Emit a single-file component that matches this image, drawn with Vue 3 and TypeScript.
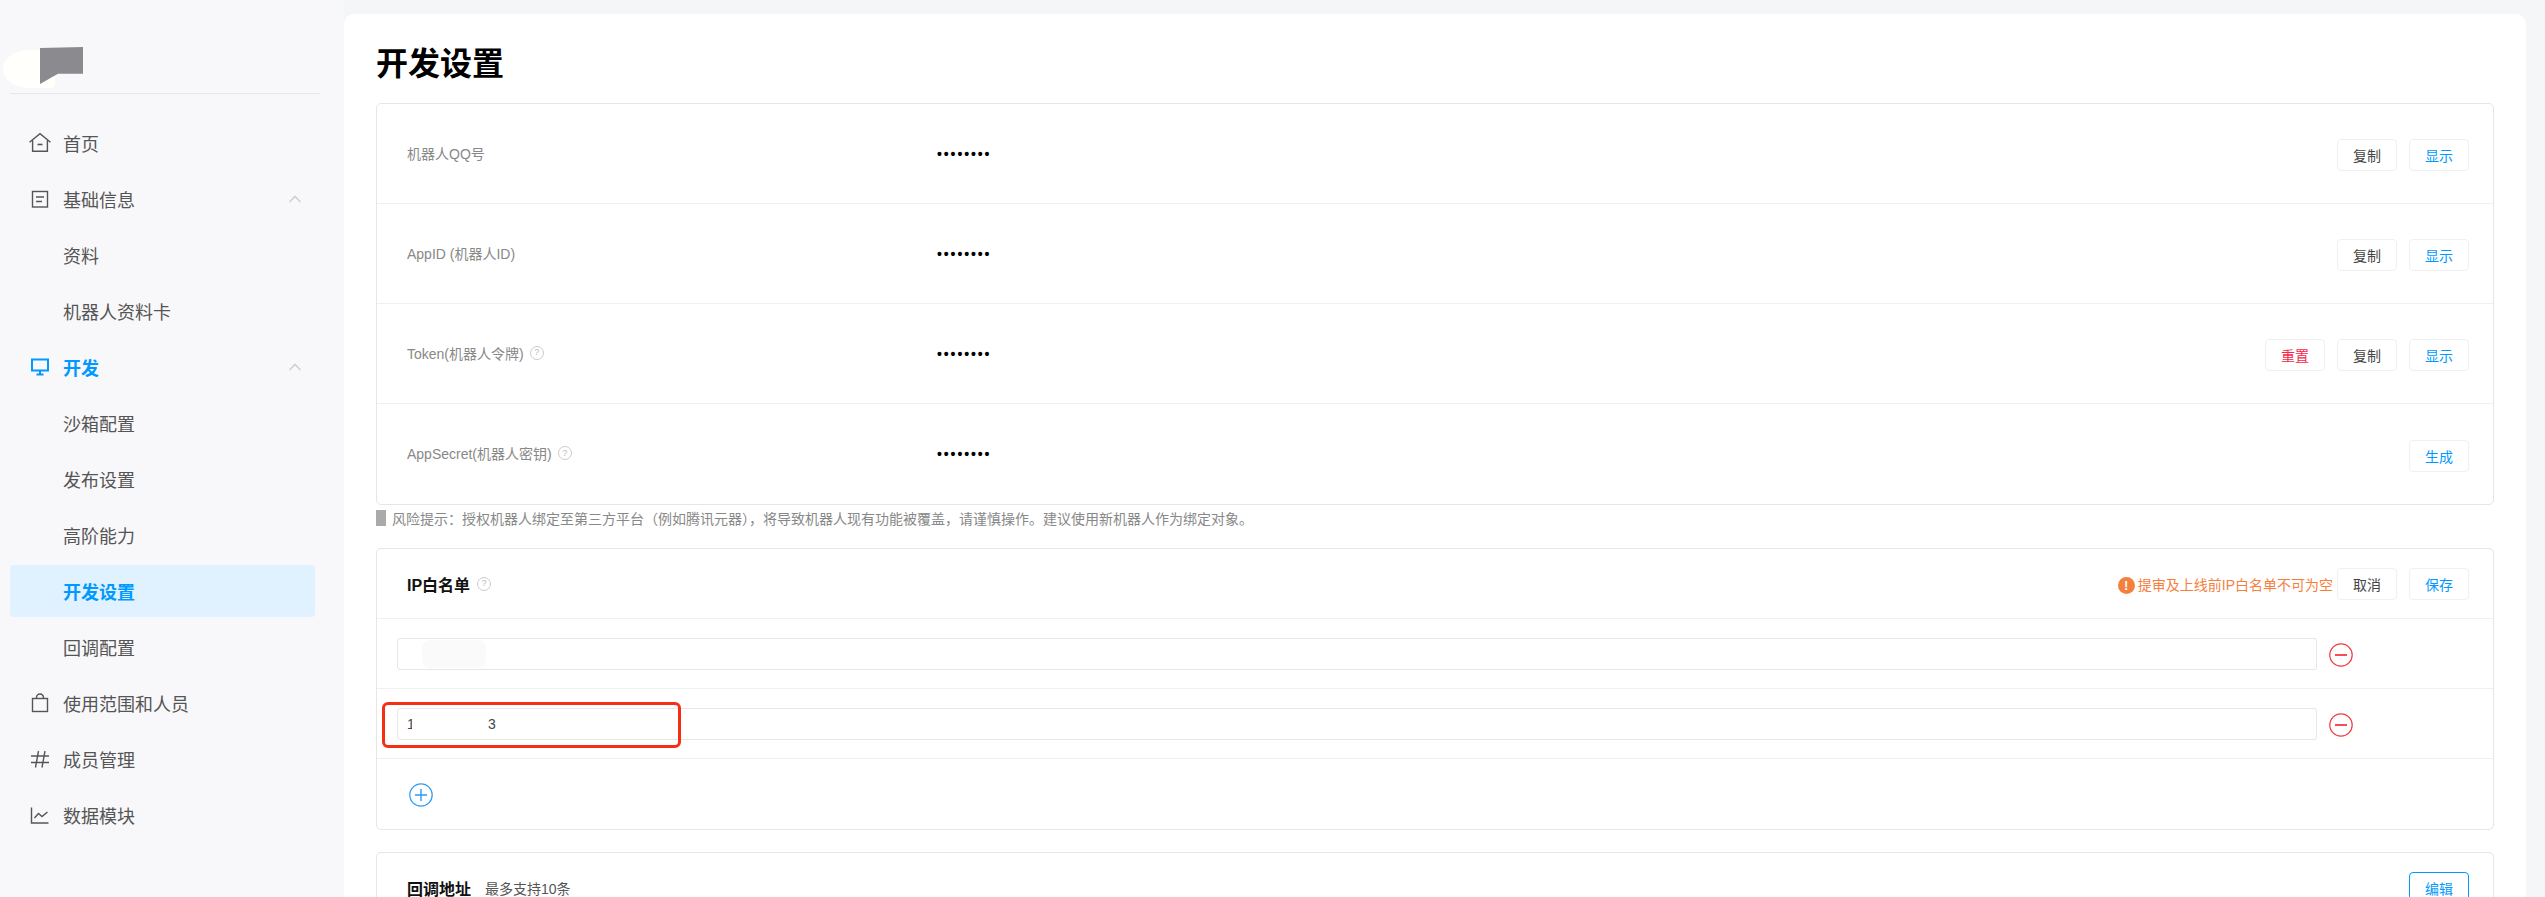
<script setup lang="ts">
type NavItem = { label: string; icon?: string; sub?: boolean; chevron?: boolean; blue?: boolean; active?: boolean }
type Action = { label: string; tone: string }

const nav: NavItem[] = [
  { label: '首页', icon: 'home' },
  { label: '基础信息', icon: 'doc', chevron: true },
  { label: '资料', sub: true },
  { label: '机器人资料卡', sub: true },
  { label: '开发', icon: 'monitor', chevron: true, blue: true },
  { label: '沙箱配置', sub: true },
  { label: '发布设置', sub: true },
  { label: '高阶能力', sub: true },
  { label: '开发设置', sub: true, active: true },
  { label: '回调配置', sub: true },
  { label: '使用范围和人员', icon: 'bag' },
  { label: '成员管理', icon: 'hash' },
  { label: '数据模块', icon: 'chart' },
]

const copy: Action = { label: '复制', tone: 'dark' }
const show: Action = { label: '显示', tone: 'blue' }

const secrets: { label: string; help: boolean; actions: Action[] }[] = [
  { label: '机器人QQ号', help: false, actions: [copy, show] },
  { label: 'AppID (机器人ID)', help: false, actions: [copy, show] },
  { label: 'Token(机器人令牌)', help: true, actions: [{ label: '重置', tone: 'red' }, copy, show] },
  { label: 'AppSecret(机器人密钥)', help: true, actions: [{ label: '生成', tone: 'blue' }] },
]
</script>

<template>
  <div class="page">
    <aside class="sidebar">
      <div class="brand">
        <span class="brand-smudge"></span>
        <span class="brand-mark"></span>
      </div>
      <nav class="nav">
        <div
          v-for="item in nav"
          :key="item.label"
          class="nav-item"
          :class="{ sub: item.sub, blue: item.blue, active: item.active }"
        >
          <span v-if="item.icon" class="nav-icon">
            <svg viewBox="0 0 24 24" width="24" height="24" fill="none" stroke="currentColor" stroke-width="1.4">
              <template v-if="item.icon === 'home'">
                <path d="M1.5 11.2 12 2.6l10.5 8.6" />
                <path d="M4.6 9.2v11h14.8v-11" />
                <path d="M9.5 13.5h5" stroke-width="1.6" />
              </template>
              <template v-else-if="item.icon === 'doc'">
                <rect x="4.5" y="4.5" width="15" height="15.5" />
                <path d="M8 10h8M8 14.5h6" />
              </template>
              <template v-else-if="item.icon === 'monitor'">
                <rect x="4" y="4.5" width="16" height="11" stroke-width="2" />
                <path d="M12 15.5v4M8.5 19.5h7" stroke-width="2" />
              </template>
              <template v-else-if="item.icon === 'bag'">
                <rect x="4.5" y="7.5" width="15" height="13" />
                <path d="M8.5 7.5V6.5a3.5 3.5 0 0 1 7 0v1" />
              </template>
              <template v-else-if="item.icon === 'hash'">
                <path d="M3 9h18M3 15.5h18M10.5 4 7.5 20.5M17 4l-3 16.5" />
              </template>
              <template v-else>
                <path d="M3.5 4.5v15.5h17" />
                <path d="M6.5 15l4-4.5 3.5 3 5.5-4.5" />
              </template>
            </svg>
          </span>
          <span class="nav-label">{{ item.label }}</span>
          <svg v-if="item.chevron" class="chevron" viewBox="0 0 14 8" width="14" height="8" fill="none">
            <path d="M1.5 7 7 1.5 12.5 7" stroke="#cfd0d2" stroke-width="1.6" />
          </svg>
        </div>
      </nav>
    </aside>

    <main class="main">
      <section class="panel">
        <h1 class="title">开发设置</h1>

        <div class="card">
          <div v-for="row in secrets" :key="row.label" class="secret-row">
            <div class="secret-label">
              <span>{{ row.label }}</span>
              <span v-if="row.help" class="help">?</span>
            </div>
            <div class="secret-value">••••••••</div>
            <div class="actions">
              <button v-for="a in row.actions" :key="a.label" class="btn" :class="a.tone">{{ a.label }}</button>
            </div>
          </div>
        </div>

        <p class="note"><i class="note-bar"></i>风险提示：授权机器人绑定至第三方平台（例如腾讯元器），将导致机器人现有功能被覆盖，请谨慎操作。建议使用新机器人作为绑定对象。</p>

        <div class="card ip-card">
          <div class="card-head">
            <div class="head-title">
              <strong>IP白名单</strong>
              <span class="help">?</span>
            </div>
            <div class="head-right">
              <span class="warn-dot">!</span>
              <span class="warn-text">提审及上线前IP白名单不可为空</span>
              <button class="btn dark">取消</button>
              <button class="btn blue">保存</button>
            </div>
          </div>

          <div class="ip-row">
            <div class="ip-input"><span class="smudge smudge-a"></span></div>
            <svg class="round" viewBox="0 0 24 24" width="24" height="24" fill="none">
              <circle cx="12" cy="12" r="11.2" stroke="#f5393c" stroke-width="1.2" />
              <path d="M6 12h12" stroke="#f5393c" stroke-width="1.8" />
            </svg>
          </div>
          <div class="ip-row">
            <div class="ip-input">
              <span class="digit-first">1</span><span class="digit-last">3</span>
              <span class="smudge smudge-b"></span>
              <span class="highlight"></span>
            </div>
            <svg class="round" viewBox="0 0 24 24" width="24" height="24" fill="none">
              <circle cx="12" cy="12" r="11.2" stroke="#f5393c" stroke-width="1.2" />
              <path d="M6 12h12" stroke="#f5393c" stroke-width="1.8" />
            </svg>
          </div>
          <div class="ip-row last">
            <svg class="add" viewBox="0 0 24 24" width="24" height="24" fill="none">
              <circle cx="12" cy="12" r="11.2" stroke="#2a9bf5" stroke-width="1.2" />
              <path d="M12 6v12M6 12h12" stroke="#2a9bf5" stroke-width="1.4" />
            </svg>
          </div>
        </div>

        <div class="card callback">
          <div class="card-head">
            <div class="head-title">
              <strong>回调地址</strong>
              <span class="head-sub">最多支持10条</span>
            </div>
            <div class="head-right">
              <button class="btn blue outlined">编辑</button>
            </div>
          </div>
        </div>
      </section>
    </main>
  </div>
</template>

<style>
html, body { margin: 0; overflow: hidden; }
</style>

<style scoped>
.page {
  display: flex;
  height: 897px;
  overflow: hidden;
  background: #f5f6f8;
  font-family: "Liberation Sans", "Noto Sans CJK SC", sans-serif;
  font-size: 14px;
  color: #333;
}
.sidebar { width: 344px; flex: none; background: #f8f8fb; }
.brand {
  position: relative;
  height: 93px;
  margin: 0 24px 0 10px;
  border-bottom: 1px solid #e8e8eb;
}
.brand-smudge {
  position: absolute;
  left: -7px;
  top: 50px;
  width: 52px;
  height: 38px;
  border-radius: 50% 10% 10% 50%;
  background: #fffffb;
}
.brand-mark {
  position: absolute;
  left: 30px;
  top: 47px;
  width: 43px;
  height: 37px;
  background: #8a8a8f;
  clip-path: polygon(0 3%, 100% 0, 100% 72%, 42% 72%, 0 100%);
}
.nav { margin-top: 23px; }
.nav-item {
  display: flex;
  align-items: center;
  height: 52px;
  margin: 0 29px 4px 10px;
  padding-left: 18px;
  border-radius: 4px;
  font-size: 18px;
  color: #555;
}
.nav-item.sub { padding-left: 53px; }
.nav-item.blue, .nav-item.active { color: #0099ff; font-weight: 700; }
.nav-item.active { background: #e0f1ff; }
.nav-icon { display: flex; width: 24px; margin-right: 11px; }
.chevron { margin-left: auto; margin-right: 13px; }

.main { flex: 1; min-width: 0; padding: 14px 19px 0 0; }
.panel {
  height: 883px;
  box-sizing: border-box;
  padding: 30px 32px 0;
  border-radius: 10px 10px 0 0;
  background: #fff;
  overflow: hidden;
}
.title {
  margin: 0 0 19px;
  font-size: 32px;
  line-height: 40px;
  font-weight: 700;
  color: #000;
}
.card {
  border: 1px solid #e6e6e6;
  border-radius: 5px;
  background: #fff;
}
.secret-row {
  display: flex;
  align-items: center;
  height: 100px;
  box-sizing: border-box;
  padding: 0 24px 0 30px;
  border-bottom: 1px solid #f0f0f0;
}
.secret-row:last-child { border-bottom: 0; }
.secret-label {
  display: flex;
  align-items: center;
  gap: 6px;
  width: 530px;
  flex: none;
  padding-bottom: 2px;
  color: #888;
}
.secret-value { flex: 1; font-size: 14px; font-weight: 700; color: #000; letter-spacing: 1.9px; }
.actions { display: flex; gap: 12px; padding-top: 3px; }
.help {
  display: inline-flex;
  align-items: center;
  justify-content: center;
  width: 12px;
  height: 12px;
  border: 1px solid #ccc;
  border-radius: 50%;
  color: #bbb;
  font-size: 9px;
  font-weight: 400;
  line-height: 1;
}
.btn {
  width: 60px;
  height: 32px;
  padding: 0;
  border: 1px solid #f0f0f0;
  border-radius: 4px;
  background: #fff;
  font-family: inherit;
  font-size: 14px;
}
.btn.dark { color: #444; }
.btn.blue { color: #0099ff; }
.btn.red { color: #f5284c; }
.btn.outlined { border-color: #0099ff; }
.note {
  display: flex;
  align-items: center;
  height: 16px;
  margin: 5px 0 22px;
  color: #888;
  font-size: 14px;
  white-space: nowrap;
}
.note-bar { width: 10px; height: 16px; margin-right: 6px; background: #aaa; }
.card-head {
  display: flex;
  align-items: center;
  justify-content: space-between;
  height: 70px;
  box-sizing: border-box;
  padding: 0 24px 0 30px;
  border-bottom: 1px solid #f0f0f0;
}
.head-title { display: flex; align-items: center; gap: 7px; }
.head-title strong { font-size: 16px; color: #111; }
.head-sub { margin-left: 7px; color: #555; }
.head-right { display: flex; align-items: center; gap: 12px; }
.warn-dot {
  display: inline-flex;
  align-items: center;
  justify-content: center;
  width: 17px;
  height: 17px;
  margin-top: 3px;
  margin-right: -9px;
  border-radius: 50%;
  background: #f5803e;
  color: #fff;
  font-size: 13px;
  font-weight: 700;
}
.warn-text { color: #f5803e; margin-top: 1px; margin-right: -8px; }
.ip-row {
  display: flex;
  align-items: center;
  gap: 12px;
  height: 70px;
  box-sizing: border-box;
  padding: 0 0 0 20px;
  border-bottom: 1px solid #f0f0f0;
}
.ip-row.last { border-bottom: 0; padding-left: 32px; }
.ip-input {
  position: relative;
  display: flex;
  align-items: center;
  width: 1920px;
  height: 32px;
  box-sizing: border-box;
  padding-left: 9px;
  border: 1px solid #e6e6e6;
  border-radius: 3px;
  color: #444;
  font-size: 14px;
}
.round { margin-top: 3px; }
.add { margin-top: 2px; }
.digit-first { width: 81px; }
.smudge { position: absolute; top: 1px; height: 28px; border-radius: 8px; }
.smudge-a { left: 24px; width: 64px; background: #fafafa; }
.smudge-b { left: 14px; width: 75px; background: #fff; }
.highlight {
  position: absolute;
  left: -16px;
  top: -7px;
  width: 299px;
  height: 46px;
  box-sizing: border-box;
  border: 3px solid #f62e14;
  border-radius: 6px;
}
.callback { margin-top: 22px; height: 120px; }
.callback .card-head { border-bottom: 0; }
</style>
